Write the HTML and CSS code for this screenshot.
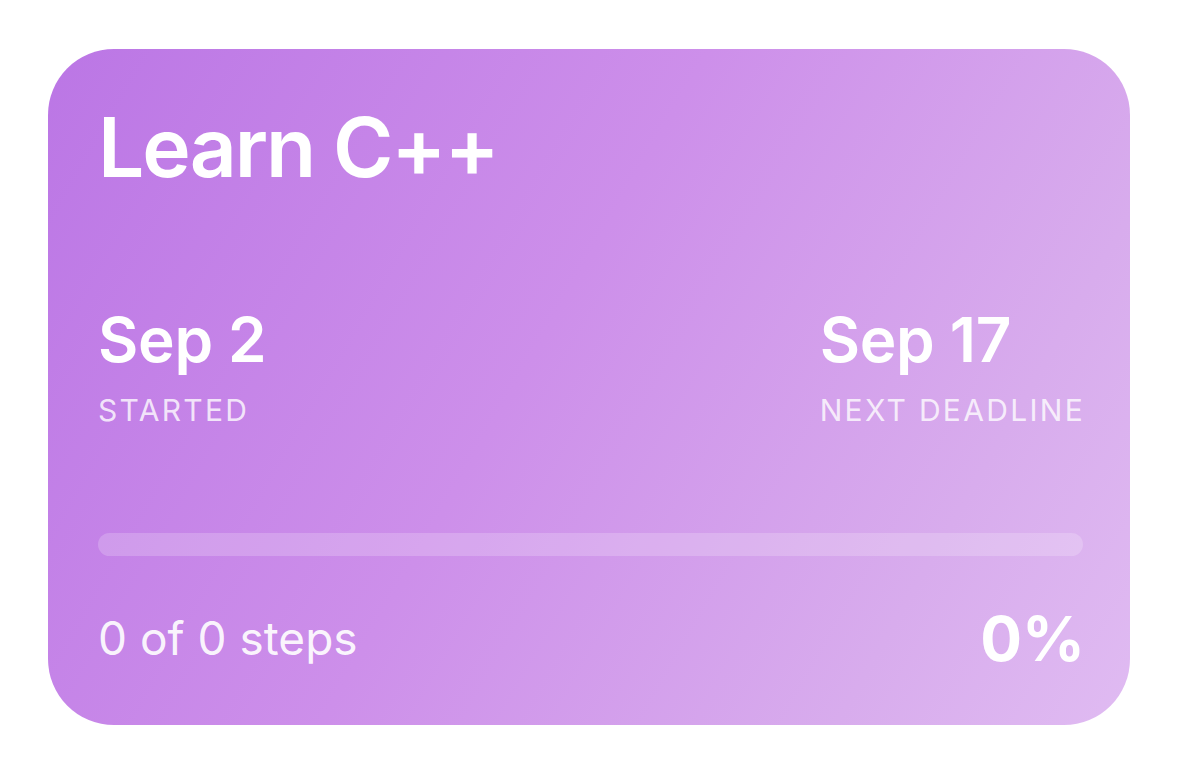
FILE: index.html
```html
<!DOCTYPE html>
<html lang="en">
<head>
<meta charset="utf-8">
<title>Learn C++</title>
<link rel="stylesheet" href="styles.css">
</head>
<body>
<div class="page">
  <div class="card">
    <h1 class="title">Learn C++</h1>
    <div class="dates">
      <div class="date-block">
        <div class="date">Sep 2</div>
        <div class="label">STARTED</div>
      </div>
      <div class="date-block">
        <div class="date">Sep 17</div>
        <div class="label label-last">NEXT DEADLINE</div>
      </div>
    </div>
    <div class="bar"><div class="bar-fill" style="width:0%"></div></div>
    <div class="footer">
      <div class="steps">0 of 0 steps</div>
      <div class="percent">0%</div>
    </div>
  </div>
</div>
</body>
</html>
```

FILE: styles.css
```css
* { box-sizing: border-box; }
html, body {
  margin: 0;
  padding: 0;
  background: #ffffff;
  font-family: Inter, "Noto Sans", "Liberation Sans", sans-serif;
}
.page {
  width: 1179px;
  height: 768px;
  padding: 49px 0 0 48px;
}
.card {
  width: 1082px;
  height: 676px;
  border-radius: 66px;
  background: linear-gradient(120deg, #bb76e5 0%, #cd8fea 45%, #d8aced 80%, #e0bbf2 100%);
  padding: 58px 47px 55px 50px;
  color: #ffffff;
  display: flex;
  flex-direction: column;
}
.title {
  margin: 0;
  font-size: 82px;
  line-height: 1;
  font-weight: 600;
  letter-spacing: -2px;
}
.dates {
  margin-top: 120px;
  display: flex;
  justify-content: space-between;
}
.date {
  font-size: 62px;
  line-height: 1;
  font-weight: 600;
  letter-spacing: -0.3px;
}
.label {
  margin-top: 24px;
  font-size: 30px;
  line-height: 1;
  font-weight: 400;
  letter-spacing: 2.3px;
  color: rgba(255, 255, 255, 0.8);
}
.label-last {
  margin-right: -2px;
}
.bar {
  margin-top: 108px;
  height: 23px;
  border-radius: 12px;
  background: rgba(255, 255, 255, 0.2);
  overflow: hidden;
}
.bar-fill {
  height: 100%;
  background: #ffffff;
}
.footer {
  margin-top: 52px;
  display: flex;
  justify-content: space-between;
  align-items: flex-start;
}
.steps {
  margin-top: 7px;
  font-size: 46px;
  line-height: 1;
  font-weight: 400;
  color: rgba(255, 255, 255, 0.92);
}
.percent {
  margin-right: -2px;
  font-size: 62px;
  line-height: 1;
  font-weight: 700;
}
```
